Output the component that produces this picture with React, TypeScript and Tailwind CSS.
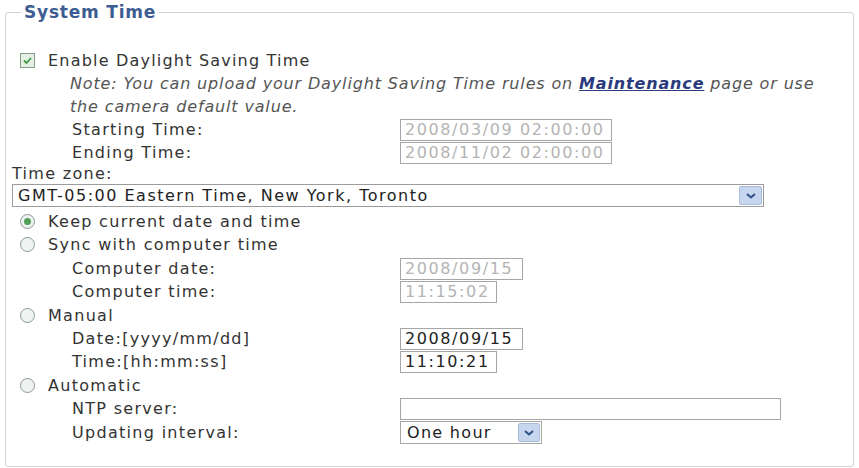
import React from "react";

const font = { fontFamily: '"DejaVu Sans", Verdana, sans-serif' };

function Check() {
  return (
    <span className="inline-flex w-[15px] h-[15px] border border-[#8c9c8c] bg-[#e4f0e2] items-center justify-center">
      <svg width="11" height="11" viewBox="0 0 11 11">
        <path d="M2 5.5 L4.5 8 L9 3" fill="none" stroke="#3f9a45" strokeWidth="1.8" />
      </svg>
    </span>
  );
}

function Radio({ on }: { on?: boolean }) {
  return (
    <span className="inline-flex w-[15px] h-[15px] rounded-full border border-[#8f9a96] bg-[#eef2f0] items-center justify-center">
      {on ? <span className="w-[7px] h-[7px] rounded-full bg-[#52a058]" /> : null}
    </span>
  );
}

function Box({ w, children, dim }: { w: string; children?: React.ReactNode; dim?: boolean }) {
  return (
    <div
      className={`${w} h-[22px] border border-[#a6a6a6] bg-white pl-[4px] leading-[20px] text-[16px] tracking-[1.6px] ${dim ? "text-[#b4b4b4]" : "text-[#222]"}`}
    >
      {children}
    </div>
  );
}

function Chevron() {
  return (
    <svg width="12" height="8" viewBox="0 0 12 8">
      <path d="M2 2 L6 5.5 L10 2" fill="none" stroke="#2f4f86" strokeWidth="2" />
    </svg>
  );
}

export default function App() {
  return (
    <div className="w-[859px] h-[468px] bg-white px-[5px] text-[#333] text-[16px] tracking-[1.3px]" style={font}>
      <fieldset className="border border-[#d2d2d2] rounded-[3px] h-[467px] pl-[6px] pr-[6px] pt-[24px] m-0">
        <legend className="ml-[9px] px-[3px] h-[24px] leading-[24px] text-[17px] font-bold text-[#3d5d92] tracking-[0.8px]">
          System Time
        </legend>

        <div className="flex flex-col">
          <div className="h-[23px] flex items-center pl-[8px] mt-[1px]">
            <Check />
            <span className="ml-[13px] tracking-[1.2px]">Enable Daylight Saving Time</span>
          </div>
          <div className="pl-[58px] italic text-[#555] leading-[23px] tracking-[0.85px]">
            Note: You can upload your Daylight Saving Time rules on{" "}
            <span className="font-bold underline text-[#2a3a7c]">Maintenance</span> page or use
            <br />
            the camera default value.
          </div>

          <div className="grid grid-cols-[388px_1fr]">
            <div className="h-[23px] leading-[23px] pl-[60px]">Starting Time:</div>
            <div className="flex items-center">
              <Box w="w-[212px]" dim>2008/03/09 02:00:00</Box>
            </div>
            <div className="h-[23px] leading-[23px] pl-[60px]">Ending Time:</div>
            <div className="flex items-center">
              <Box w="w-[212px]" dim>2008/11/02 02:00:00</Box>
            </div>
          </div>

          <div className="h-[20px] leading-[20px]">Time zone:</div>
          <div className="w-[752px] h-[23px] border border-[#9c9c9c] flex items-center justify-between pl-[5px] pr-[1px]">
            <span className="text-[#222] tracking-[1.5px]">GMT-05:00 Eastern Time, New York, Toronto</span>
            <span className="w-[23px] h-[19px] bg-[#c6d6ee] border border-[#a9bcd8] rounded-[2px] flex items-center justify-center">
              <Chevron />
            </span>
          </div>

          <div className="h-[3px]" />
          <div className="h-[23px] flex items-center pl-[8px]">
            <Radio on />
            <span className="ml-[13px]">Keep current date and time</span>
          </div>
          <div className="h-[23px] flex items-center pl-[8px]">
            <Radio />
            <span className="ml-[13px]">Sync with computer time</span>
          </div>

          <div className="grid grid-cols-[388px_1fr] mt-[1px]">
            <div className="h-[23px] leading-[23px] pl-[60px]">Computer date:</div>
            <div className="flex items-center">
              <Box w="w-[123px]" dim>2008/09/15</Box>
            </div>
            <div className="h-[23px] leading-[23px] pl-[60px]">Computer time:</div>
            <div className="flex items-center">
              <Box w="w-[97px]" dim>11:15:02</Box>
            </div>
          </div>

          <div className="h-[23px] flex items-center pl-[8px] mt-[1px]">
            <Radio />
            <span className="ml-[13px]">Manual</span>
          </div>

          <div className="grid grid-cols-[388px_1fr]">
            <div className="h-[23px] leading-[23px] pl-[60px]">Date:[yyyy/mm/dd]</div>
            <div className="flex items-center">
              <Box w="w-[123px]">2008/09/15</Box>
            </div>
            <div className="h-[23px] leading-[23px] pl-[60px]">Time:[hh:mm:ss]</div>
            <div className="flex items-center">
              <Box w="w-[97px]">11:10:21</Box>
            </div>
          </div>

          <div className="h-[23px] flex items-center pl-[8px] mt-[1px]">
            <Radio />
            <span className="ml-[13px]">Automatic</span>
          </div>

          <div className="grid grid-cols-[388px_1fr]">
            <div className="h-[23px] leading-[23px] pl-[60px]">NTP server:</div>
            <div className="flex items-center">
              <Box w="w-[381px]" />
            </div>
            <div className="h-[24px] leading-[26px] pl-[60px]">Updating interval:</div>
            <div className="flex items-end">
              <div className="w-[142px] h-[23px] border border-[#a6a6a6] flex items-center justify-between pl-[6px] pr-[1px] text-[#222]">
                <span>One hour</span>
                <span className="w-[22px] h-[19px] bg-[#c6d6ee] border border-[#a9bcd8] rounded-[2px] flex items-center justify-center">
                  <Chevron />
                </span>
              </div>
            </div>
          </div>
        </div>
      </fieldset>
    </div>
  );
}
